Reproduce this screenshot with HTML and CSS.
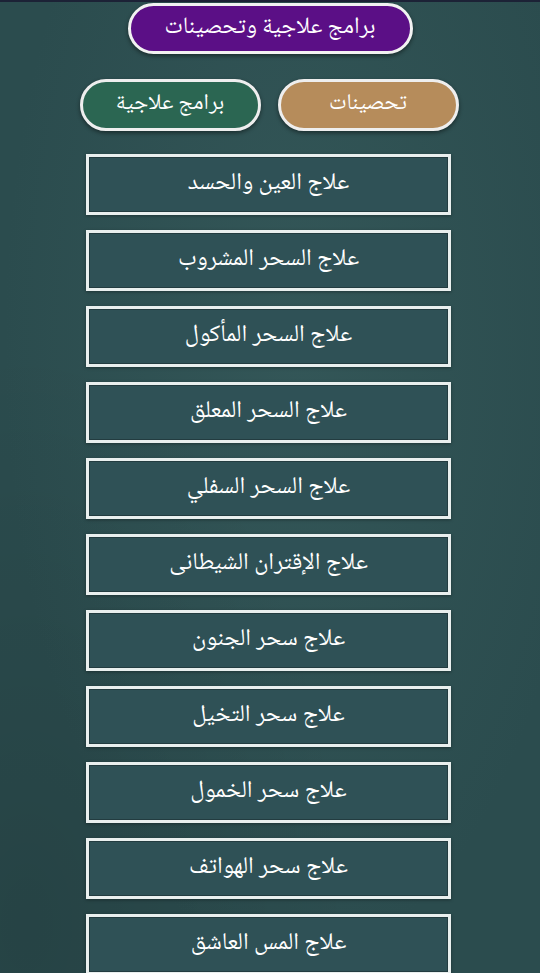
FILE: index.html
```html
<!DOCTYPE html>
<html lang="ar" dir="rtl">
<head>
<meta charset="utf-8">
<title>برامج علاجية وتحصينات</title>
<link rel="stylesheet" href="styles.css">
</head>
<body>
<div class="topbar"></div>
<main class="page">
  <header class="title-pill">برامج علاجية وتحصينات</header>
  <nav class="tabs">
    <button class="tab tab-tan">تحصينات</button>
    <button class="tab tab-green">برامج علاجية</button>
  </nav>
  <ul class="list">
    <li class="item">علاج العين والحسد</li>
    <li class="item">علاج السحر المشروب</li>
    <li class="item">علاج السحر المأكول</li>
    <li class="item">علاج السحر المعلق</li>
    <li class="item">علاج السحر السفلي</li>
    <li class="item">علاج الإقتران الشيطانى</li>
    <li class="item">علاج سحر الجنون</li>
    <li class="item">علاج سحر التخيل</li>
    <li class="item">علاج سحر الخمول</li>
    <li class="item">علاج سحر الهواتف</li>
    <li class="item">علاج المس العاشق</li>
  </ul>
</main>
</body>
</html>
```

FILE: styles.css
```css
html, body {
  margin: 0;
  padding: 0;
}
body {
  width: 540px;
  height: 973px;
  overflow: hidden;
  background: #2b4c4e;
  background-image:
    radial-gradient(ellipse at 55% 35%, rgba(70, 110, 110, 0.3), rgba(0, 0, 0, 0) 70%),
    radial-gradient(ellipse at 5% 95%, rgba(0, 0, 0, 0.12), rgba(0, 0, 0, 0) 45%);
  font-family: "Noto Naskh Arabic", "DejaVu Sans", sans-serif;
  color: #ffffff;
}
.topbar {
  height: 2px;
  background: #1c2236;
}
.page {
  display: flex;
  flex-direction: column;
  align-items: center;
}
.title-pill {
  box-sizing: border-box;
  margin-top: 1px;
  width: 285px;
  height: 51px;
  border: 3px solid #f2f2f2;
  border-radius: 26px;
  background: #5b0f86;
  box-shadow: 0 2px 4px rgba(0, 0, 0, 0.45);
  display: flex;
  align-items: center;
  justify-content: center;
  font-size: 23.5px;
  padding-bottom: 2px;
}
.tabs {
  display: flex;
  gap: 17px;
  margin-top: 25px;
  margin-right: 2px;
}
.tab {
  box-sizing: border-box;
  width: 181px;
  height: 52px;
  border: 3px solid #eeeeee;
  border-radius: 26px;
  box-shadow: 0 2px 4px rgba(0, 0, 0, 0.45);
  font-family: inherit;
  font-size: 22.5px;
  color: #ffffff;
  padding: 0 0 2px 0;
}
.tab-tan {
  background: #b68c5b;
}
.tab-green {
  background: #2b6652;
}
.list {
  list-style: none;
  margin: 23px 3px 0 0;
  padding: 0;
  display: flex;
  flex-direction: column;
  gap: 15px;
}
.item {
  box-sizing: border-box;
  width: 365px;
  height: 61px;
  border: 3px solid #e9efee;
  background: #2f5156;
  box-shadow: inset 0 0 0 1px rgba(0, 0, 0, 0.25), 0 1px 3px rgba(0, 0, 0, 0.35);
  display: flex;
  align-items: center;
  justify-content: center;
  font-size: 24px;
  padding-bottom: 2px;
}
```
